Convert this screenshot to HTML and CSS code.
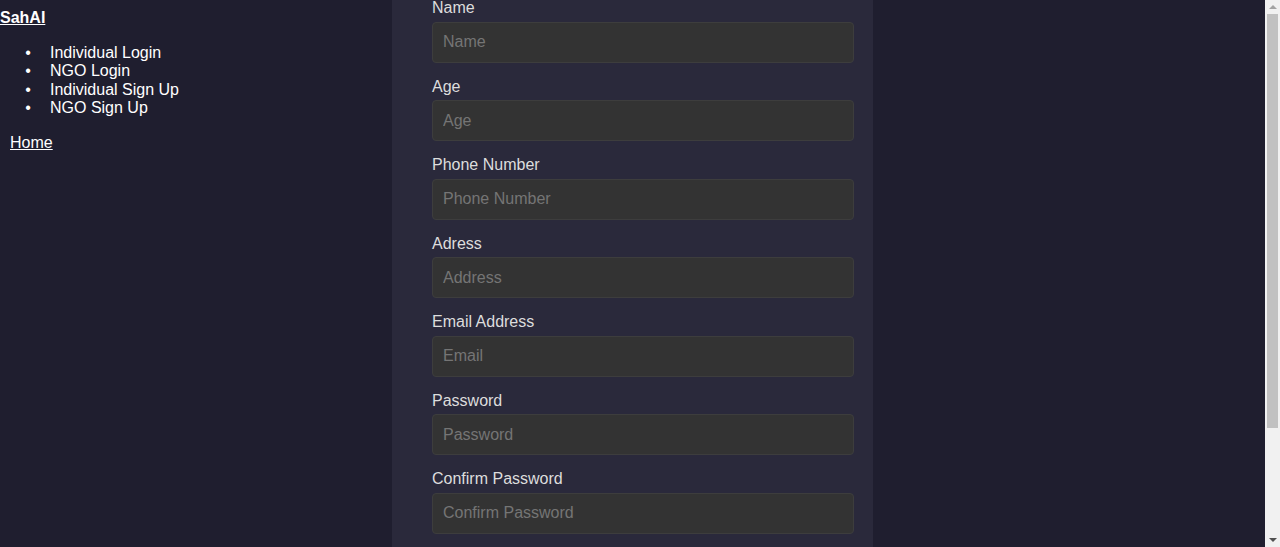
FILE: index.html
```html
<!DOCTYPE html>
<html lang="en">
<head>
<meta charset="utf-8">
<title>SahAI - Sign Up</title>
<link rel="stylesheet" href="styles.css">
</head>
<body>
<div class="window">
<div class="page">
  <nav class="nav">
    <a class="brand" href="#">SahAI</a>
    <div class="nav-inner">
      <ul class="nav-list">
        <li>Individual Login</li>
        <li>NGO Login</li>
        <li>Individual Sign Up</li>
        <li>NGO Sign Up</li>
      </ul>
      <a class="home" href="#">Home</a>
    </div>
  </nav>
  <main class="card">
    <form class="form">
      <label class="label first" for="name">Name</label>
      <input class="input" id="name" type="text" placeholder="Name">
      <label class="label" for="age">Age</label>
      <input class="input" id="age" type="text" placeholder="Age">
      <label class="label" for="phone">Phone Number</label>
      <input class="input" id="phone" type="text" placeholder="Phone Number">
      <label class="label" for="address">Adress</label>
      <input class="input" id="address" type="text" placeholder="Address">
      <label class="label" for="email">Email Address</label>
      <input class="input" id="email" type="text" placeholder="Email">
      <label class="label" for="password">Password</label>
      <input class="input" id="password" type="password" placeholder="Password">
      <label class="label" for="confirm">Confirm Password</label>
      <input class="input" id="confirm" type="password" placeholder="Confirm Password">
      <button class="submit" type="button">Sign Up</button>
    </form>
  </main>
  <div class="spacer"></div>
</div>
<div class="scrollbar" aria-hidden="true">
  <div class="sb-btn"><span class="arrow-up"></span></div>
  <div class="sb-track"><div class="sb-thumb"></div></div>
  <div class="sb-btn"><span class="arrow-down"></span></div>
</div>
</div>
</body>
</html>
```

FILE: styles.css
```css
html, body {
  margin: 0;
  padding: 0;
  height: 100%;
  overflow: hidden;
}
body {
  background: #1f1e2f;
  font-family: "Liberation Sans", Arial, sans-serif;
  font-size: 16px;
  line-height: 18.5px;
  color: #ffffff;
}
.window {
  display: flex;
  height: 100vh;
}
.page {
  flex: 1;
  min-width: 0;
  height: 100%;
  overflow: hidden;
  display: grid;
  grid-template-columns: 1fr 481px 1fr;
  align-items: start;
}
.nav {
  padding-top: 8px;
}
.brand {
  color: #ffffff;
  font-weight: bold;
  text-decoration: underline;
  line-height: 19px;
}
.nav-inner {
  padding-left: 10px;
}
.nav-list {
  margin: 16px 0;
  padding-left: 40px;
}
.nav-list li::marker {
  content: "\2022\2003\2009";
}
.home {
  color: #ffffff;
  text-decoration: underline;
}
.card {
  background: #2a293b;
  padding: 0 40px 60px;
  min-height: 626px;
}
.form {
  display: flex;
  flex-direction: column;
  align-items: flex-start;
}
.label {
  display: block;
  color: #dddddd;
  margin-bottom: 4px;
}
.label.first {
  margin-top: -1px;
}
.input {
  display: block;
  width: calc(100% - 1px);
  box-sizing: content-box;
  padding: 10px;
  height: 19px;
  margin: 0 0 15px;
  background: #333333;
  border: 1px solid #3d3d3d;
  border-radius: 4px;
  color: #dddddd;
  font-family: "Liberation Sans", Arial, sans-serif;
  font-size: 16px;
  outline: none;
}
.input::placeholder {
  color: #757575;
}
.submit {
  width: 100%;
  padding: 10px;
  margin-top: 5px;
  background: #5a4fcf;
  color: #ffffff;
  border: none;
  border-radius: 4px;
  font-family: "Liberation Sans", Arial, sans-serif;
  font-size: 16px;
}
.scrollbar {
  width: 15px;
  flex: none;
  background: #f1f1f1;
  display: flex;
  flex-direction: column;
}
.sb-btn {
  height: 14px;
  flex: none;
  display: flex;
  align-items: center;
  justify-content: center;
}
.arrow-up {
  width: 0;
  height: 0;
  border-left: 4px solid transparent;
  border-right: 4px solid transparent;
  border-bottom: 4px solid #a3a3a3;
}
.arrow-down {
  width: 0;
  height: 0;
  border-left: 4px solid transparent;
  border-right: 4px solid transparent;
  border-top: 4px solid #505050;
}
.sb-track {
  flex: 1;
  padding: 0 2px;
}
.sb-thumb {
  height: 414px;
  background: #c1c1c1;
}
```
